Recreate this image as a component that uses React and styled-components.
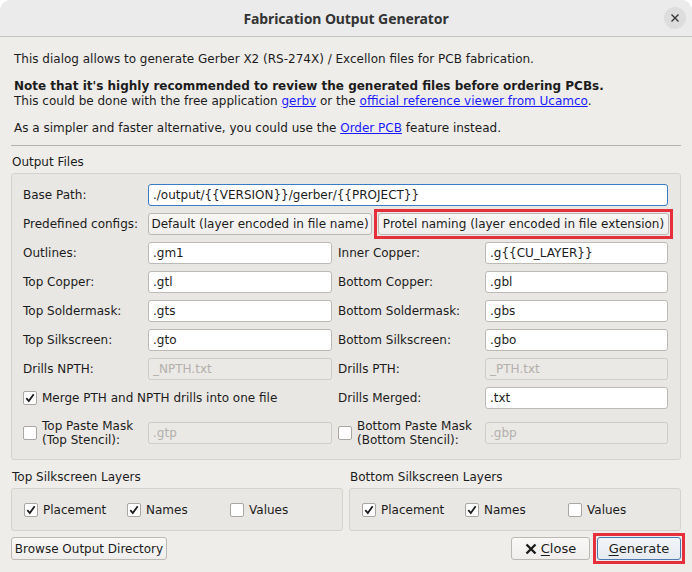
import React from "react";
import styled, { createGlobalStyle } from "styled-components";

const Global = createGlobalStyle`
  html, body {
    margin: 0;
    padding: 0;
    background: #ffffff;
  }
  * { box-sizing: border-box; }
`;

const Window = styled.div`
  width: 692px;
  height: 572px;
  background: #efedea;
  border-radius: 11px 11px 0 0;
  overflow: hidden;
  font-family: "DejaVu Sans", "Noto Sans", sans-serif;
  font-size: 12px;
  color: #2e2e2e;
  display: flex;
  flex-direction: column;
`;

const TitleBar = styled.div`
  height: 37px;
  flex: none;
  background: #ebebeb;
  border-bottom: 1px solid #c4c4c4;
  display: flex;
  align-items: center;
  justify-content: center;
  position: relative;
`;

const Title = styled.div`
  font-family: "Noto Sans", "DejaVu Sans", sans-serif;
  font-weight: 700;
  font-size: 14px;
  color: #333;
  letter-spacing: -0.1px;
`;

const CloseCircle = styled.div`
  position: absolute;
  right: 6px;
  top: 7px;
  width: 22px;
  height: 22px;
  border-radius: 50%;
  background: #dddddd;
  display: flex;
  align-items: center;
  justify-content: center;
`;

const Content = styled.div`
  padding: 0 11px;
  display: flex;
  flex-direction: column;
`;

const Intro = styled.div`
  padding: 15px 3px 0;
  color: #1c1c1c;
`;

const Para = styled.p`
  margin: 0 0 12px;
  line-height: 15px;
  &:last-child { margin-bottom: 0; }
`;

const Strong = styled.span`
  font-weight: 700;
  display: block;
`;

const Link = styled.a`
  color: #1a1aff;
  text-decoration: underline;
`;

const Separator = styled.div`
  height: 1px;
  background: #b5b2ae;
  margin-top: 9px;
`;

const GroupTitle = styled.div`
  line-height: 15px;
  margin-top: ${(p) => p.top || 9}px;
  margin-bottom: 3px;
  padding-left: 1px;
  color: #1c1c1c;
`;

const GroupBox = styled.div`
  border: 1px solid #d6d3cf;
  border-radius: 3px;
  background: #e9e7e3;
`;

const FormGrid = styled(GroupBox)`
  display: grid;
  grid-template-columns: 119px 184px 141px 183px;
  grid-template-rows: repeat(8, 22px) 34px;
  column-gap: 6px;
  row-gap: 7px;
  padding: 10px 12px 9px 11px;
  align-items: center;
`;

const Label = styled.div`
  color: #1c1c1c;
  line-height: 14px;
  white-space: nowrap;
`;

const Input = styled.div`
  height: 22px;
  grid-column: ${(p) => p.span || "auto"};
  background: ${(p) => (p.disabled ? "#ebe9e6" : "#ffffff")};
  border: 1px solid ${(p) => (p.focus ? "#3a7bc8" : p.disabled ? "#cfccc8" : "#bdb9b5")};
  border-radius: 3px;
  padding: 0 4px;
  display: flex;
  align-items: center;
  color: ${(p) => (p.disabled ? "#b3b0ac" : "#1c1c1c")};
  white-space: nowrap;
  overflow: hidden;
`;

const ButtonPair = styled.div`
  grid-column: 2 / span 3;
  display: flex;
  gap: 6px;
  height: 22px;
`;

const Highlight = styled.div`
  display: flex;
  margin: -4px;
  padding: 1px;
  border: 3px solid #e5303c;
`;

const Button = styled.div`
  height: ${(p) => p.h || 22}px;
  width: ${(p) => (p.w ? `${p.w}px` : "auto")};
  padding: 0 5px;
  border: 1px solid ${(p) => (p.primary ? "#4a7ab0" : "#bcb8b4")};
  border-radius: 3px;
  background: ${(p) =>
    p.primary
      ? "linear-gradient(#f2f5f9, #e6ebf1)"
      : "linear-gradient(#f9f8f7, #efeeec)"};
  display: flex;
  align-items: center;
  justify-content: center;
  gap: 4px;
  color: #1c1c1c;
  white-space: nowrap;
  font-size: ${(p) => p.fs || 12}px;
`;

const CheckRow = styled.div`
  display: flex;
  align-items: center;
  gap: 5px;
  grid-column: ${(p) => p.span || "auto"};
  color: #1c1c1c;
  white-space: nowrap;
  line-height: 14px;
`;

const Box = styled.div`
  width: 14px;
  height: 14px;
  flex: none;
  background: #ffffff;
  border: 1px solid #aaa6a2;
  border-radius: 2px;
  display: flex;
  align-items: center;
  justify-content: center;
`;

const SilkRow = styled.div`
  display: grid;
  grid-template-columns: 1fr 1fr;
  column-gap: 6px;
`;

const SilkBox = styled(GroupBox)`
  height: 43px;
  display: grid;
  grid-template-columns: 103px 103px 1fr;
  align-items: center;
  padding: 0 12px;
`;

const Footer = styled.div`
  display: flex;
  align-items: center;
  margin-top: 6px;
`;

const Spacer = styled.div`
  flex: 1;
`;

const U = styled.span`
  text-decoration: underline;
  text-underline-offset: 2px;
`;

const Check = ({ on }) => (
  <Box>
    {on && (
      <svg width="10" height="10" viewBox="0 0 10 10">
        <path d="M1.3 5.2 L3.8 8 L8.7 1.2" fill="none" stroke="#1c1c1c" strokeWidth="1.8" />
      </svg>
    )}
  </Box>
);

const CheckItem = ({ on, children, span }) => (
  <CheckRow span={span}>
    <Check on={on} />
    <span>{children}</span>
  </CheckRow>
);

const rows = [
  ["Outlines:", ".gm1", "Inner Copper:", ".g{{CU_LAYER}}"],
  ["Top Copper:", ".gtl", "Bottom Copper:", ".gbl"],
  ["Top Soldermask:", ".gts", "Bottom Soldermask:", ".gbs"],
  ["Top Silkscreen:", ".gto", "Bottom Silkscreen:", ".gbo"],
];

const SilkGroup = ({ title }) => (
  <div>
    <GroupTitle top={10}>{title}</GroupTitle>
    <SilkBox>
      <CheckItem on>Placement</CheckItem>
      <CheckItem on>Names</CheckItem>
      <CheckItem>Values</CheckItem>
    </SilkBox>
  </div>
);

export default function App() {
  return (
    <>
      <Global />
      <Window>
        <TitleBar>
          <Title>Fabrication Output Generator</Title>
          <CloseCircle>
            <svg width="10" height="10" viewBox="0 0 10 10">
              <path d="M1.5 1.5 L8.5 8.5 M8.5 1.5 L1.5 8.5" stroke="#333" strokeWidth="1.3" />
            </svg>
          </CloseCircle>
        </TitleBar>
        <Content>
          <Intro>
            <Para>
              This dialog allows to generate Gerber X2 (RS-274X) / Excellon files for PCB fabrication.
            </Para>
            <Para>
              <Strong>Note that it's highly recommended to review the generated files before ordering PCBs.</Strong>
              This could be done with the free application <Link>gerbv</Link> or the{" "}
              <Link>official reference viewer from Ucamco</Link>.
            </Para>
            <Para>
              As a simpler and faster alternative, you could use the <Link>Order PCB</Link> feature instead.
            </Para>
          </Intro>
          <Separator />
          <GroupTitle>Output Files</GroupTitle>
          <FormGrid>
            <Label>Base Path:</Label>
            <Input span="2 / span 3" focus>
              ./output/{"{{"}VERSION{"}}"}/gerber/{"{{"}PROJECT{"}}"}
            </Input>

            <Label>Predefined configs:</Label>
            <ButtonPair>
              <Button w={224}>Default (layer encoded in file name)</Button>
              <Highlight>
                <Button w={291}>Protel naming (layer encoded in file extension)</Button>
              </Highlight>
            </ButtonPair>

            {rows.map(([l1, v1, l2, v2]) => (
              <React.Fragment key={l1}>
                <Label>{l1}</Label>
                <Input>{v1}</Input>
                <Label>{l2}</Label>
                <Input>{v2}</Input>
              </React.Fragment>
            ))}

            <Label>Drills NPTH:</Label>
            <Input disabled>_NPTH.txt</Input>
            <Label>Drills PTH:</Label>
            <Input disabled>_PTH.txt</Input>

            <CheckItem on span="1 / span 2">Merge PTH and NPTH drills into one file</CheckItem>
            <Label>Drills Merged:</Label>
            <Input>.txt</Input>

            <CheckItem>
              Top Paste Mask
              <br />
              (Top Stencil):
            </CheckItem>
            <Input disabled>.gtp</Input>
            <CheckItem>
              Bottom Paste Mask
              <br />
              (Bottom Stencil):
            </CheckItem>
            <Input disabled>.gbp</Input>
          </FormGrid>
          <SilkRow>
            <SilkGroup title="Top Silkscreen Layers" />
            <SilkGroup title="Bottom Silkscreen Layers" />
          </SilkRow>
          <Footer>
            <Button w={156} h={23}>Browse Output Directory</Button>
            <Spacer />
            <Button w={79} h={23} fs={13}>
              <svg width="12" height="12" viewBox="0 0 12 12">
                <path d="M1.5 1.5 L10.5 10.5 M10.5 1.5 L1.5 10.5" stroke="#1c1c1c" strokeWidth="2.4" />
              </svg>
              <span>
                <U>C</U>lose
              </span>
            </Button>
            <div style={{ width: 7 }} />
            <Highlight>
              <Button w={84} h={23} fs={13} primary>
                <span>
                  <U>G</U>enerate
                </span>
              </Button>
            </Highlight>
          </Footer>
        </Content>
      </Window>
    </>
  );
}
